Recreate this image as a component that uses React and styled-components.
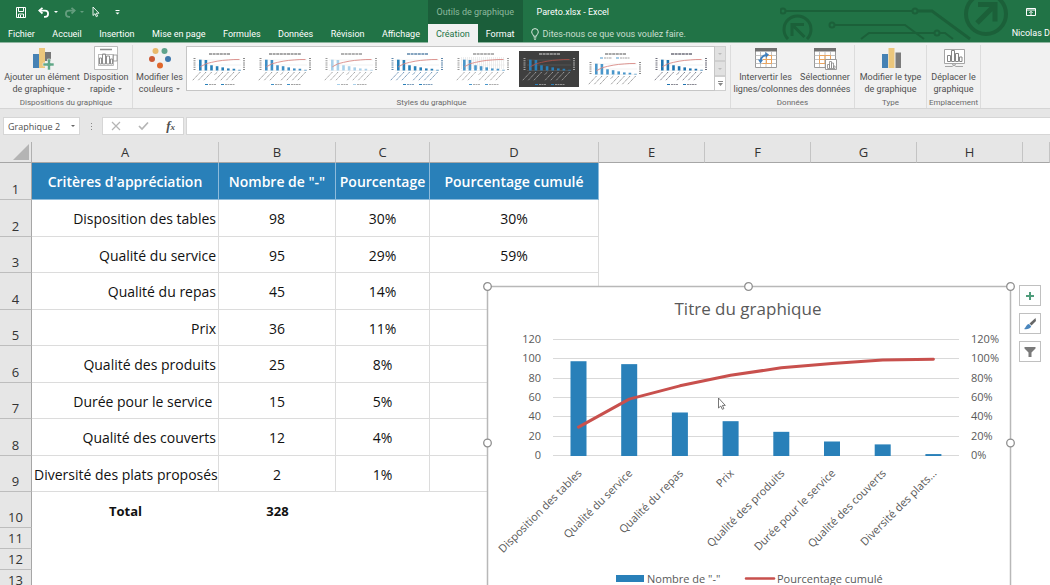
import React, { useState } from "react";
import styled, { createGlobalStyle, css } from "styled-components";

const GlobalStyle = createGlobalStyle`
  * {
    box-sizing: border-box;
  }
  body {
    margin: 0;
    background: #fff;
    font-family: Roboto, "Open Sans", sans-serif;
    font-size: 9px;
    color: #505050;
  }
  button,
  input {
    font: inherit;
    color: inherit;
    margin: 0;
    padding: 0;
    border: 0;
    background: none;
  }
  svg {
    display: block;
  }
`;

const Page = styled.div`
  display: flex;
  flex-direction: column;
  height: 100vh;
  overflow: hidden;
`;

/* ---------- title bar and tabs ---------- */

const Header = styled.header`
  display: flex;
  flex: none;
  background: #217346;
  border-bottom: 1px solid #8fb5a0;
  color: #fff;
`;

const HeaderBlock = styled.div`
  position: relative;
  display: flex;
  flex-direction: column;
  flex: ${(p) => (p.$grow ? "1" : "none")};
  width: ${(p) => (p.$width ? `${p.$width}px` : "auto")};
  background: ${(p) => (p.$dark ? "#1b5e3a" : "transparent")};
`;

const TitleRow = styled.div`
  position: relative;
  display: flex;
  align-items: center;
  justify-content: ${(p) => p.$justify || "flex-start"};
  height: 24px;
  padding: 0 ${(p) => p.$pad || 0}px;
  white-space: nowrap;
  color: ${(p) => (p.$muted ? "#8db99d" : "#fff")};
`;

const QuickButton = styled.button`
  display: flex;
  align-items: center;
  opacity: ${(p) => (p.$off ? 0.3 : 1)};
  margin-right: ${(p) => p.$gap || 0}px;
`;

const TabRow = styled.nav`
  position: relative;
  display: flex;
  justify-content: ${(p) => (p.$spread ? "space-between" : "flex-start")};
  height: 18px;
`;

const Tab = styled.button`
  padding: 0 8px;
  height: 19px;
  white-space: nowrap;
  color: ${(p) => (p.$active ? "#217346" : "#fff")};
  background: ${(p) => (p.$active ? "#f1f1f1" : "transparent")};
`;

const TellMe = styled.button`
  display: flex;
  align-items: center;
  gap: 4px;
  padding-left: 8px;
  height: 19px;
  white-space: nowrap;
  color: #c9decf;
`;

const Account = styled.span`
  margin-left: auto;
  line-height: 19px;
  white-space: nowrap;
`;

const Circuit = styled.svg`
  position: absolute;
  top: 0;
  right: 40px;
`;

/* ---------- ribbon ---------- */

const Ribbon = styled.section`
  display: flex;
  flex: none;
  height: 66px;
  background: #f1f1f1;
  border-bottom: 1px solid #d5d5d5;
`;

const Group = styled.div`
  display: flex;
  flex-direction: column;
  width: ${(p) => p.$width}px;
  flex: none;
  margin-top: 2px;
  border-right: 1px solid #dcdcdc;
`;

const GroupBody = styled.div`
  display: flex;
  justify-content: center;
  flex: 1;
`;

const GroupLabel = styled.div`
  font-size: 8px;
  line-height: 10px;
  text-align: center;
  white-space: nowrap;
  color: #6a6a6a;
`;

const BigButton = styled.button`
  display: flex;
  flex-direction: column;
  align-items: center;
  width: ${(p) => p.$width}px;
  padding-top: 1px;
  line-height: 12px;
  white-space: nowrap;
  svg {
    margin-bottom: 1px;
  }
`;

const Caret = styled.span`
  display: inline-block;
  margin-left: 3px;
  vertical-align: 2px;
  border: 2px solid transparent;
  border-top-color: #777;
  border-bottom: 0;
`;

const Gallery = styled.div`
  display: flex;
  align-items: center;
  flex: 1;
  gap: 6px;
  height: 45px;
  margin-top: 1px;
  padding-left: 2px;
  background: #fff;
  border: 1px solid #c6c6c6;
`;

const ThumbButton = styled.button`
  width: 60px;
  height: 36px;
`;

const Scroller = styled.div`
  display: flex;
  flex-direction: column;
  width: 11px;
  height: 45px;
  margin: 1px 4px 0 0;
`;

const ScrollButton = styled.button`
  display: flex;
  align-items: center;
  justify-content: center;
  flex: 1;
  background: ${(p) => (p.$on ? "#fff" : "#e1e1e1")};
  border: 1px solid #cfcfcf;
  border-left: 0;
`;

/* ---------- formula bar ---------- */

const FormulaBar = styled.div`
  display: flex;
  flex: none;
  height: 33px;
  padding: 8px 0 7px 3px;
  background: #e6e6e6;
`;

const barBox = css`
  display: flex;
  align-items: center;
  background: #fff;
  border: 1px solid #d6d6d6;
`;

const NameBox = styled.div`
  ${barBox}
  width: 77px;
  padding: 0 4px;
  font-family: "Open Sans", sans-serif;
  input {
    flex: 1;
    min-width: 0;
  }
`;

const Dots = styled.div`
  display: flex;
  flex-direction: column;
  align-items: center;
  justify-content: center;
  gap: 2px;
  width: 22px;
  i {
    width: 1px;
    height: 1px;
    background: #888;
  }
`;

const FormulaTools = styled.div`
  ${barBox}
  justify-content: space-between;
  width: 82px;
  padding: 0 8px;
  margin-right: 2px;
`;

const FxButton = styled.button`
  font-family: "Liberation Serif", serif;
  font-style: italic;
  font-weight: bold;
  font-size: 13px;
  line-height: 14px;
  sub {
    font-size: 9px;
    line-height: 1px;
    vertical-align: baseline;
  }
`;

const FormulaInput = styled.input`
  ${barBox}
  flex: 1;
  min-width: 0;
  border-right: 0;
`;

/* ---------- sheet ---------- */

const Sheet = styled.main`
  position: relative;
  flex: 1;
  min-height: 0;
  overflow: hidden;
  font-family: "Open Sans", "Noto Sans", sans-serif;
`;

const Grid = styled.table`
  width: 100%;
  table-layout: fixed;
  border-collapse: separate;
  border-spacing: 0;
  font-size: 14px;
  color: #111;
`;

const ColHead = styled.th`
  height: 21px;
  padding: 0;
  font-size: 13px;
  font-weight: normal;
  line-height: 20px;
  color: #333;
  background: #e6e6e6;
  border-right: 1px solid ${(p) => (p.$corner ? "#b0b0b0" : "#c4c4c4")};
  border-bottom: 1px solid #a6a6a6;
  svg {
    margin-left: auto;
    margin-right: 2px;
  }
`;

const Row = styled.tr`
  height: ${(p) => p.$height}px;
`;

const RowHead = styled.th`
  padding: 0;
  font-size: 13px;
  font-weight: normal;
  line-height: 19px;
  vertical-align: bottom;
  color: #333;
  background: #e6e6e6;
  border-right: 1px solid #a6a6a6;
  border-bottom: 1px solid #bdbdbd;
`;

const Cell = styled.td`
  padding: 2px 2px 0;
  line-height: 20px;
  white-space: nowrap;
  text-align: ${(p) => (p.$right ? "right" : "center")};
  ${(p) =>
    p.$lines &&
    css`
      border-right: 1px solid #dcdcdc;
      border-bottom: 1px solid #dcdcdc;
    `}
  ${(p) =>
    p.$title &&
    css`
      color: #fff;
      background: #2980b9;
      font-weight: 600;
      border-color: #8dbbdb;
    `}
  ${(p) =>
    p.$bold &&
    css`
      font-weight: bold;
      font-size: 13px;
    `}
`;

/* the chart floats over the cells */
const ChartObject = styled.div`
  position: absolute;
  left: 482px;
  top: 139px;
  display: flex;
  gap: 3px;
`;

const ChartSvg = styled.svg`
  text {
    font-family: "Open Sans", "Noto Sans", sans-serif;
    font-size: 11px;
    fill: #595959;
  }
  .title {
    font-size: 17px;
  }
`;

const ChartTools = styled.div`
  display: flex;
  flex-direction: column;
  gap: 7px;
  padding-top: 4px;
`;

const ChartTool = styled.button`
  display: flex;
  align-items: center;
  justify-content: center;
  width: 22px;
  height: 21px;
  background: #fff;
  border: 1px solid #c0c0c0;
`;

/* ---------- data ---------- */

const rows = [
  ["Disposition des tables", 98, "30%", "30%"],
  ["Qualité du service", 95, "29%", "59%"],
  ["Qualité du repas", 45, "14%", ""],
  ["Prix", 36, "11%", ""],
  ["Qualité des produits", 25, "8%", ""],
  ["Durée pour le service\u00a0", 15, "5%", ""],
  ["Qualité des couverts", 12, "4%", ""],
  ["Diversité des plats proposés", 2, "1%", ""],
];

const titles = [
  "Critères d'appréciation",
  'Nombre de "-"',
  "Pourcentage",
  "Pourcentage cumulé",
];

const columns = [
  ["A", 187],
  ["B", 117],
  ["C", 94],
  ["D", 169],
  ["E", 106],
  ["F", 106],
  ["G", 106],
  ["H", 106],
];

const tabs = [
  "Fichier",
  "Accueil",
  "Insertion",
  "Mise en page",
  "Formules",
  "Données",
  "Révision",
  "Affichage",
];

/* ---------- icons ---------- */

const SaveIcon = () => (
  <svg width="10" height="11" viewBox="0 0 10 11" fill="none" stroke="#fff">
    <path d="M.5 .5h9v10h-9z" />
    <path d="M2.5 .5v4h5v-4M2.5 10.500v-3.500h5v3.500" />
    <path d="M4.500 8v2.500" />
  </svg>
);

const UndoIcon = ({ flip }) => (
  <svg width="12" height="11" viewBox="0 0 12 11" fill="none" stroke="#fff">
    <g transform={flip ? "translate(12 0) scale(-1 1)" : undefined}>
      <path d="M4.500 .8L1.300 3.600l3.200 2.900" strokeWidth="1.700" />
      <path d="M1.500 3.600h5.500a3 3 0 0 1 0 6.200H6" strokeWidth="1.800" />
    </g>
  </svg>
);

const SmallCaret = ({ color = "#fff" }) => (
  <svg width="4" height="2" viewBox="0 0 4 2">
    <path d="M0 0h4L2 2z" fill={color} />
  </svg>
);

const PointerIcon = () => (
  <svg width="8" height="12" viewBox="0 0 8 12" fill="none" stroke="#fff">
    <path d="M1 1v8.500l2-1.800 1.300 3 1.300-.6-1.300-2.900H7z" strokeWidth=".9" />
  </svg>
);

const CustomizeIcon = () => (
  <svg width="5" height="5" viewBox="0 0 5 5" fill="#fff">
    <path d="M.5 0h4v1h-4zM.5 2.500h4l-2 2z" />
  </svg>
);

const BulbIcon = () => (
  <svg width="8" height="12" viewBox="0 0 8 12" fill="none" stroke="#dcebe1">
    <path d="M2.500 8.200C2.500 6.500 .7 5.900 .7 3.900a3.300 3.300 0 0 1 6.600 0c0 2-1.800 2.600-1.800 4.300zM2.700 9.900h2.600M3.200 11.300h1.600" />
  </svg>
);

const WindowIcon = () => (
  <svg width="10" height="8" viewBox="0 0 10 8" fill="none" stroke="#fff">
    <path d="M.5 .5h9v7h-9zM.5 2h9" />
    <path d="M5 7V3.500M3.300 5L5 3.300 6.700 5" strokeWidth=".9" />
  </svg>
);

const CircuitArt = () => (
  <Circuit
    width="230"
    height="40"
    viewBox="0 0 230 40"
    fill="none"
    stroke="#1b6039"
    strokeWidth="2"
  >
    <circle cx="3" cy="11" r="2.500" />
    <path d="M6 11h126" />
    <circle cx="135" cy="11" r="2.500" />
    <path d="M138 11h14l38 28" strokeWidth="3" />
    <circle cx="52" cy="25" r="2.500" />
    <path d="M55 25h70l19 14" />
    <path d="M81 39l8-6h65" />
    <circle cx="157" cy="33" r="2.500" />
    <path d="M160 33h5l8 6" />
    <path d="M8 39a13.500 13.500 0 1 1 19 0" strokeWidth="3" />
    <path d="M12 36V24.500h12M12.500 25l12 12" strokeWidth="3" />
    <circle cx="206" cy="14" r="20" strokeWidth="4" />
    <path d="M198 4.500h17v17M214 6l-17 17" strokeWidth="5" />
  </Circuit>
);

const AddElementIcon = () => (
  <svg width="24" height="24" viewBox="0 0 24 24">
    <path fill="#4682b4" d="M3 8h6v14H3z" />
    <path fill="#ecc77c" d="M9 2h6v20H9z" />
    <path fill="#777" d="M15 6h6v9h-6z" />
    <path
      fill="#5fa787"
      stroke="#f1f1f1"
      strokeWidth=".6"
      d="M17.500 13h3v4H24v3h-3.500v4h-3v-4H13v-3h4.500z"
    />
  </svg>
);

const LayoutIcon = () => (
  <svg width="24" height="24" viewBox="0 0 24 24" fill="none" stroke="#8f8f8f">
    <path fill="#fff" stroke="#bdbdbd" d="M.5 .5h23v23H.5z" />
    <path d="M6 3.500h12" strokeWidth="1.500" />
    <path d="M4.500 8v11.500M4.500 8.500h15v11h-15z" stroke="#bbb" />
    <path d="M5.500 12h2v6h-2zM8.500 8h3v10h-3zM12.500 10h3v8h-3zM16.500 13h2v5h-2z" />
    <path d="M19 9h4v6h-4z" strokeWidth=".8" />
  </svg>
);

const ColorsIcon = () => (
  <svg width="24" height="24" viewBox="0 0 24 24">
    <circle cx="7.500" cy="5" r="3" fill="#e9b96a" />
    <circle cx="16.500" cy="5" r="3" fill="#5fa38c" />
    <circle cx="4" cy="13" r="3" fill="#cc5a35" />
    <circle cx="20" cy="13" r="3" fill="#3e78ad" />
    <circle cx="12" cy="19.500" r="3" fill="#e0672b" />
  </svg>
);

const TableBase = ({ accent }) => (
  <>
    <path d="M1.500 3.500h21v18h-21z" fill="#fff" stroke="#999" />
    <path d="M1 2h22v3.500H1z" fill="#707070" />
    <path
      d="M1.500 9.500h21M1.500 13.500h21M1.500 17.500h21M6.500 5v16M12 5v16M17.500 5v16"
      stroke="#b4b4b4"
      fill="none"
      strokeWidth=".8"
    />
    <path d={accent} stroke="#e9a45f" fill="none" />
  </>
);

const SwapIcon = () => (
  <svg width="24" height="24" viewBox="0 0 24 24">
    <TableBase accent="M12.500 9.500h5v8h-9M12.500 9.500v8M9 13.500h8.500" />
    <path d="M6.500 15Q7 10 12 9" stroke="#3f7fbd" strokeWidth="1.800" fill="none" />
    <path d="M11 6l4 2.500L12 12zM4 13.500l5 .5-2.500 3.500z" fill="#3f7fbd" />
  </svg>
);

const SelectDataIcon = () => (
  <svg width="24" height="24" viewBox="0 0 24 24">
    <TableBase accent="M6.500 9.500h11v8h-11zM12 9.500v8M6.500 13.500h11" />
    <path d="M12.500 13.500h11v10h-11z" fill="#fff" stroke="#999" />
    <path
      d="M14.500 18.500h2v4h-2zM16.500 15.500h2v7h-2zM18.500 17h2v5.500h-2zM20.500 20h1.500v2.500h-1.500z"
      stroke="#888"
      strokeWidth=".8"
      fill="none"
    />
  </svg>
);

const ChartTypeIcon = () => (
  <svg width="24" height="24" viewBox="0 0 24 24">
    <path fill="#4682b4" d="M3 8h6v14H3z" />
    <path fill="#ecc77c" d="M9.500 2h6v20h-6z" />
    <path fill="#7b7b7b" d="M16.500 6.500h5.500V22h-5.500z" />
  </svg>
);

const MoveChartIcon = () => (
  <svg width="24" height="24" viewBox="0 0 24 24" fill="none" stroke="#a5a5a5">
    <path fill="#fff" d="M2.500 3.500h20v14h-20z" />
    <path
      stroke="#858585"
      d="M5.500 9.500h3v6h-3zM9.500 4.500h3v11h-3zM13.500 7.500h3v8h-3zM17.500 11h2.500v4.500h-2.500z"
    />
    <path d="M3 20.500h7l4-2.500M10 18l4 2.500h7" />
  </svg>
);

const BrushIcon = () => (
  <svg width="14" height="14" viewBox="0 0 14 14">
    <path d="M12.500 1L13 4 8.500 8.500l-2-2z" fill="#666" />
    <path d="M6 7l2.200 2.200C7 12 4 12.500 1 12c2-1 2-4.500 5-5z" fill="#4a86bd" />
  </svg>
);

const FilterIcon = () => (
  <svg width="12" height="12" viewBox="0 0 12 12" fill="#7a7a7a">
    <path d="M.5 1h11v1.500L7.500 6.500V11h-3V6.500L.5 2.500z" />
  </svg>
);

/* ---------- charts ---------- */

const counts = rows.map((r) => r[1]);
const total = counts.reduce((a, b) => a + b, 0);
const cumulated = counts.map(
  (_, i) => (counts.slice(0, i + 1).reduce((a, b) => a + b, 0) / total) * 100
);

const thumbStyles = [
  { bar: "#2980b9", ink: "#8a8a8a" },
  { bar: "#3f8fc6", ink: "#8a8a8a", wide: true },
  { bar: "#a9d0ea", ink: "#999" },
  { bar: "#2980b9", ink: "#5d86ab" },
  { bar: "#4a97cb", ink: "#999", hatch: true },
  { bar: "#2980b9", ink: "#aaa", dark: true },
  { bar: "#4a97cb", ink: "#8a8a8a", low: true },
  { bar: "#1f73b0", ink: "#6d6d7a" },
];

const Thumb = ({ bar, ink, dark, hatch, low, wide }) => {
  const base = low ? 23 : 19;
  return (
    <svg width="60" height="36" viewBox="0 0 60 36">
      <path d="M0 0h60v36H0z" fill={dark ? "#3f3f3f" : "#fff"} />
      {hatch && (
        <path
          d="M8 7h44M8 9h44M8 11h44M8 13h44M8 15h44M8 17h44"
          stroke="#ddd"
          strokeDasharray="1 1"
        />
      )}
      <path
        d={`M8 ${base + 0.5}h44M8 ${base - 5}h44M8 ${base - 10}h44`}
        stroke={dark ? "#666" : "#e6e6e6"}
        strokeWidth=".5"
      />
      <path
        d={wide ? "M14 3h32" : "M20 3h21"}
        stroke={ink}
        strokeWidth="1.300"
        strokeDasharray="3 .6"
      />
      <path
        d={`M5.500 ${base - 12}v13M55 ${base - 12}v13`}
        stroke={ink}
        strokeWidth="2"
        strokeDasharray="1 1.200"
      />
      {counts.map((n, i) => (
        <rect
          key={i}
          x={10 + i * 5.6}
          y={base - n / 9.5}
          width="2.600"
          height={n / 9.5 + 0.5}
          fill={bar}
        />
      ))}
      {counts.map((_, i) => (
        <path
          key={i}
          d={`M${11.5 + i * 5.6} ${base + 2}l-${i === 3 ? 3 : 8} ${i === 3 ? 3 : 8.5}`}
          stroke={ink}
          strokeWidth=".9"
          strokeDasharray="1.400 .5"
        />
      ))}
      <polyline
        points={cumulated
          .map((p, i) => `${11.3 + i * 5.6},${base - p / 9.5}`)
          .join(" ")}
        fill="none"
        stroke={dark ? "#a85048" : "#d98a86"}
        strokeWidth=".9"
      />
      <path
        d={low ? "M15 7h3M31 7h3" : "M16 33.500h3M32 33.500h3"}
        stroke={bar}
        strokeWidth="1"
      />
      <path
        d={low ? "M19 7h8M35 7h10" : "M20 33.500h7M36 33.500h10"}
        stroke={ink}
        strokeWidth=".8"
        strokeDasharray="2 .5"
      />
    </svg>
  );
};

const ZERO = 175;
const barX = (i) => 96.5 + i * 50.7;
const valueY = (v) => ZERO - v * 0.967;
const ticks = [0, 20, 40, 60, 80, 100, 120];

const ParetoChart = () => (
  <ChartSvg width="534" height="325" viewBox="0 0 534 325">
    <rect
      x="5.500"
      y="5.500"
      width="523"
      height="313"
      fill="#fff"
      stroke="#b8b8b8"
      strokeWidth="1.500"
    />
    <text className="title" x="266" y="34" textAnchor="middle">
      Titre du graphique
    </text>
    {ticks.map((t) => (
      <g key={t}>
        <path d={`M71 ${Math.round(valueY(t)) - 0.5}h406`} stroke="#d9d9d9" />
        <text x="59" y={valueY(t) + 3} textAnchor="end">
          {t}
        </text>
        <text x="489" y={valueY(t) + 3}>
          {t}%
        </text>
      </g>
    ))}
    {counts.map((n, i) => (
      <rect
        key={i}
        x={barX(i) - 8}
        y={valueY(n)}
        width="16"
        height={ZERO - valueY(n)}
        fill="#2980b9"
      />
    ))}
    <polyline
      points={cumulated.map((p, i) => `${barX(i)},${valueY(p)}`).join(" ")}
      fill="none"
      stroke="#c8504d"
      strokeWidth="3"
      strokeLinecap="round"
      strokeLinejoin="round"
    />
    {rows.map((r, i) => (
      <text
        key={r[0]}
        textAnchor="end"
        transform={`translate(${barX(i) + 4} 193) rotate(-45)`}
      >
        {i === 7 ? "Diversité des plats..." : r[0].trim()}
      </text>
    ))}
    <path d="M134 294h28v7h-28z" fill="#2980b9" />
    <text x="165" y="302">
      Nombre de "-"
    </text>
    <path d="M264 297.500h28" stroke="#c8504d" strokeWidth="2.500" strokeLinecap="round" />
    <text x="295" y="302">
      Pourcentage cumulé
    </text>
    {[
      [5.5, 5.5],
      [266.5, 5.5],
      [528.5, 5.5],
      [5.5, 162],
      [528.5, 162],
      [5.5, 318.5],
      [266.5, 318.5],
      [528.5, 318.5],
    ].map(([x, y]) => (
      <circle
        key={`${x}-${y}`}
        cx={x}
        cy={y}
        r="3.800"
        fill="#fff"
        stroke="#8f8f8f"
        strokeWidth="1.300"
      />
    ))}
    <path
      d="M236.500 117v10l2.300-2 1.500 3.300 1.600-.7-1.500-3.200h2.900z"
      fill="#fff"
      stroke="#555"
      strokeWidth=".8"
    />
  </ChartSvg>
);

const App = () => {
  const [style, setStyle] = useState(5);
  const [name, setName] = useState("Graphique 2");
  const [formula, setFormula] = useState("");

  return (
    <>
      <GlobalStyle />
      <Page>
        <Header>
          <HeaderBlock $width={428}>
            <TitleRow $pad={16}>
              <QuickButton aria-label="Enregistrer" $gap={12}>
                <SaveIcon />
              </QuickButton>
              <QuickButton aria-label="Annuler" $gap={4}>
                <UndoIcon />
              </QuickButton>
              <QuickButton aria-label="Options d'annulation" $gap={6}>
                <SmallCaret />
              </QuickButton>
              <QuickButton aria-label="Rétablir" $gap={4} $off>
                <UndoIcon flip />
              </QuickButton>
              <QuickButton aria-label="Options de rétablissement" $gap={8} $off>
                <SmallCaret />
              </QuickButton>
              <QuickButton aria-label="Mode souris" $gap={15}>
                <PointerIcon />
              </QuickButton>
              <QuickButton aria-label="Personnaliser">
                <CustomizeIcon />
              </QuickButton>
            </TitleRow>
            <TabRow $spread>
              {tabs.map((t) => (
                <Tab key={t}>{t}</Tab>
              ))}
            </TabRow>
          </HeaderBlock>
          <HeaderBlock $dark>
            <TitleRow $justify="center" $muted>
              Outils de graphique
            </TitleRow>
            <TabRow>
              <Tab $active>Création</Tab>
              <Tab>Format</Tab>
            </TabRow>
          </HeaderBlock>
          <HeaderBlock $grow>
            <CircuitArt />
            <TitleRow $justify="space-between" $pad={14}>
              <span>Pareto.xlsx - Excel</span>
              <QuickButton aria-label="Options du ruban">
                <WindowIcon />
              </QuickButton>
            </TitleRow>
            <TabRow>
              <TellMe>
                <BulbIcon />
                Dites-nous ce que vous voulez faire.
              </TellMe>
              <Account>Nicolas D</Account>
            </TabRow>
          </HeaderBlock>
        </Header>

        <Ribbon>
          <Group $width={133}>
            <GroupBody>
              <BigButton $width={80}>
                <AddElementIcon />
                <span>Ajouter un élément</span>
                <span>
                  de graphique
                  <Caret />
                </span>
              </BigButton>
              <BigButton $width={48}>
                <LayoutIcon />
                <span>Disposition</span>
                <span>
                  rapide
                  <Caret />
                </span>
              </BigButton>
            </GroupBody>
            <GroupLabel>Dispositions du graphique</GroupLabel>
          </Group>
          <Group $width={598}>
            <GroupBody>
              <BigButton $width={53}>
                <ColorsIcon />
                <span>Modifier les</span>
                <span>
                  couleurs
                  <Caret />
                </span>
              </BigButton>
              <Gallery>
                {thumbStyles.map((s, i) => (
                  <ThumbButton
                    key={i}
                    aria-label={`Style ${i + 1}`}
                    aria-pressed={i === style}
                    onClick={() => setStyle(i)}
                  >
                    <Thumb {...s} />
                  </ThumbButton>
                ))}
              </Gallery>
              <Scroller>
                <ScrollButton aria-label="Monter">
                  <SmallCaret color="#bbb" />
                </ScrollButton>
                <ScrollButton aria-label="Descendre">
                  <SmallCaret color="#bbb" />
                </ScrollButton>
                <ScrollButton aria-label="Autres" $on>
                  <svg width="5" height="5" viewBox="0 0 5 5" fill="#888">
                    <path d="M0 0h5v1H0zM0 2h5L2.500 5z" />
                  </svg>
                </ScrollButton>
              </Scroller>
            </GroupBody>
            <GroupLabel>Styles du graphique</GroupLabel>
          </Group>
          <Group $width={124}>
            <GroupBody>
              <BigButton $width={65}>
                <SwapIcon />
                <span>Intervertir les</span>
                <span>lignes/colonnes</span>
              </BigButton>
              <BigButton $width={54}>
                <SelectDataIcon />
                <span>Sélectionner</span>
                <span>des données</span>
              </BigButton>
            </GroupBody>
            <GroupLabel>Données</GroupLabel>
          </Group>
          <Group $width={72}>
            <GroupBody>
              <BigButton $width={68}>
                <ChartTypeIcon />
                <span>Modifier le type</span>
                <span>de graphique</span>
              </BigButton>
            </GroupBody>
            <GroupLabel>Type</GroupLabel>
          </Group>
          <Group $width={54}>
            <GroupBody>
              <BigButton $width={50}>
                <MoveChartIcon />
                <span>Déplacer le</span>
                <span>graphique</span>
              </BigButton>
            </GroupBody>
            <GroupLabel>Emplacement</GroupLabel>
          </Group>
        </Ribbon>

        <FormulaBar>
          <NameBox>
            <input
              aria-label="Zone Nom"
              value={name}
              onChange={(e) => setName(e.target.value)}
            />
            <button aria-label="Liste des noms">
              <SmallCaret color="#666" />
            </button>
          </NameBox>
          <Dots>
            <i />
            <i />
            <i />
          </Dots>
          <FormulaTools>
            <button aria-label="Annuler la saisie">
              <svg width="10" height="10" viewBox="0 0 10 10" stroke="#b5b5b5">
                <path d="M1 1l8 8M9 1L1 9" strokeWidth="1.200" />
              </svg>
            </button>
            <button aria-label="Valider">
              <svg width="11" height="10" viewBox="0 0 11 10" fill="none">
                <path d="M1 5l3 3 6-6.500" stroke="#b5b5b5" strokeWidth="1.700" />
              </svg>
            </button>
            <FxButton aria-label="Insérer une fonction">
              f<sub>x</sub>
            </FxButton>
          </FormulaTools>
          <FormulaInput
            aria-label="Barre de formule"
            value={formula}
            onChange={(e) => setFormula(e.target.value)}
          />
        </FormulaBar>

        <Sheet>
          <Grid>
            <colgroup>
              <col width="32" />
              {columns.map(([letter, width]) => (
                <col key={letter} width={width} />
              ))}
              <col />
            </colgroup>
            <thead>
              <tr>
                <ColHead $corner>
                  <svg width="16" height="16" viewBox="0 0 16 16">
                    <path d="M16 0v16H0z" fill="#b4b4b4" />
                  </svg>
                </ColHead>
                {columns.map(([letter]) => (
                  <ColHead key={letter}>{letter}</ColHead>
                ))}
                <ColHead />
              </tr>
            </thead>
            <tbody>
              <Row $height={37}>
                <RowHead>1</RowHead>
                {titles.map((t) => (
                  <Cell key={t} $lines $title>
                    {t}
                  </Cell>
                ))}
              </Row>
              {rows.map((r, i) => (
                <Row key={r[0]} $height={i % 2 ? 36 : 37}>
                  <RowHead>{i + 2}</RowHead>
                  {r.map((value, j) => (
                    <Cell key={j} $lines $right={j === 0}>
                      {value}
                    </Cell>
                  ))}
                </Row>
              ))}
              <Row $height={36}>
                <RowHead>10</RowHead>
                <Cell $bold>Total</Cell>
                <Cell $bold>{total}</Cell>
              </Row>
              {[11, 12, 13].map((n) => (
                <Row key={n} $height={21}>
                  <RowHead>{n}</RowHead>
                </Row>
              ))}
            </tbody>
          </Grid>

          <ChartObject>
            <ParetoChart />
            <ChartTools>
              <ChartTool aria-label="Éléments de graphique">
                <svg width="8" height="8" viewBox="0 0 8 8" fill="#4f9d7c">
                  <path d="M3 0h2v3h3v2H5v3H3V5H0V3h3z" />
                </svg>
              </ChartTool>
              <ChartTool aria-label="Styles de graphique">
                <BrushIcon />
              </ChartTool>
              <ChartTool aria-label="Filtres de graphique">
                <FilterIcon />
              </ChartTool>
            </ChartTools>
          </ChartObject>
        </Sheet>
      </Page>
    </>
  );
};

export default App;
